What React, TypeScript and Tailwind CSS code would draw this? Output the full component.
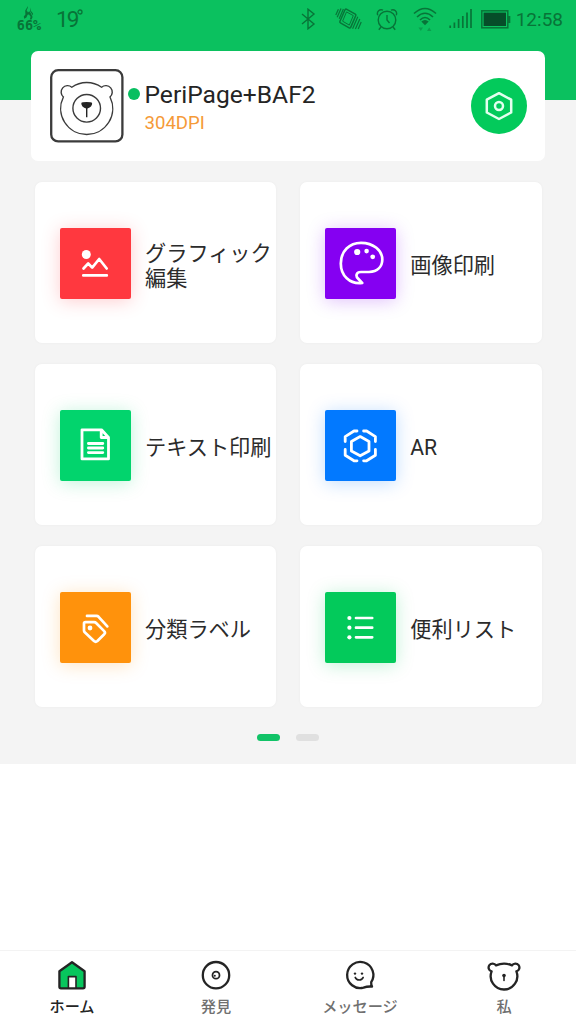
import type { ReactNode } from 'react'

const jp = "font-['Roboto','Noto_Sans_CJK_JP',sans-serif]"

interface Tile {
  label: string
  box: string
  icon: ReactNode
}

const tiles: Tile[] = [
  {
    label: 'グラフィック編集',
    box: 'bg-[#ff383f] shadow-[0_2px_18px_#ff383f40]',
    icon: (
      <>
        <circle cx="26.3" cy="26.5" r="4.5" fill="white" stroke="none" />
        <path d="M23.5 40.5L28.2 35.5L32.2 39.6L39.2 31L46.7 40.5M23.3 47.4H46.8" strokeWidth="2.7" />
      </>
    ),
  },
  {
    label: '画像印刷',
    box: 'bg-[#8500f2] shadow-[0_2px_18px_#8500f240]',
    icon: (
      <>
        <path
          d="M37.2 55C24.5 56.5 15.8 47.5 15.8 35.5C15.8 23 24.5 14.8 36 14.8C48.5 14.8 57.3 22.5 57.3 31.5C57.3 38.5 52.5 43.5 44 44H36C31 44 30.5 48 33 50.5Z"
          strokeWidth="2.7"
        />
        <g fill="white" stroke="none">
          <circle cx="32.2" cy="24" r="3.1" />
          <circle cx="41.6" cy="23.1" r="2.3" />
          <circle cx="47.7" cy="28.8" r="2.4" />
        </g>
      </>
    ),
  },
  {
    label: 'テキスト印刷',
    box: 'bg-[#02d46d] shadow-[0_2px_18px_#02d46d40]',
    icon: (
      <>
        <path d="M22 19.8H41.5L48.5 27.5V48.9H22ZM41.2 20V27.5H48.5" strokeWidth="2.8" />
        <path d="M28.4 33.5H42.8M28.4 38H42.8M28.4 42.6H42.8" strokeWidth="2.8" />
      </>
    ),
  },
  {
    label: 'AR',
    box: 'bg-[#0279ff] shadow-[0_2px_18px_#0279ff40]',
    icon: (
      <>
        <path d="M35.2 26.6L44 31.4V41L35.2 45.8L26.4 41V31.4Z" strokeWidth="2.8" />
        <path
          d="M32 21H29L20.2 26.6V31.6M38.6 21H41.6L50.4 26.6V31.6M32 50.8H29L20.2 45.3V39.5M38.6 50.8H41.6L50.4 45.3V39.5"
          strokeWidth="2.8"
        />
      </>
    ),
  },
  {
    label: '分類ラベル',
    box: 'bg-[#ff920c] shadow-[0_2px_18px_#ff920c40]',
    icon: (
      <>
        <path d="M27 23.9H36.5Q37.7 23.9 38.6 24.8L47.3 34.4" strokeWidth="2.7" />
        <path
          d="M25.5 30.2H34.2Q35.3 30.2 36.1 31L44.2 39.1Q45.7 40.6 44.2 42.2L37.4 49Q35.7 50.5 34 49L25 40.6Q24 39.7 24 38.5V31.7Q24 30.2 25.5 30.2Z"
          strokeWidth="2.7"
        />
        <circle cx="30" cy="36" r="2.4" fill="white" stroke="none" />
      </>
    ),
  },
  {
    label: '便利リスト',
    box: 'bg-[#03ca5b] shadow-[0_2px_18px_#03ca5b40]',
    icon: (
      <>
        <g fill="white" stroke="none">
          <circle cx="24.4" cy="26" r="2.1" />
          <circle cx="24.4" cy="35.7" r="2.1" />
          <circle cx="24.4" cy="45.3" r="2.1" />
        </g>
        <path d="M31 26H47.2M31 35.7H47.2M31 45.3H47.2" strokeWidth="2.7" />
      </>
    ),
  },
]

const tabs = [
  {
    label: 'ホーム',
    active: true,
    icon: (
      <>
        <path d="M18 4.2L30.6 13.3V28.7Q30.6 30.3 29 30.3H7Q5.4 30.3 5.4 28.7V13.3Z" fill="#07c65d" />
        <path d="M14.4 30V18.6H22V30Z" fill="white" strokeWidth="1.6" />
      </>
    ),
  },
  {
    label: '発見',
    icon: (
      <>
        <circle cx="18" cy="17.2" r="13.2" />
        <circle cx="18" cy="17.2" r="3.5" strokeWidth="1.8" />
        <circle cx="16.8" cy="17.8" r="1" fill="#242424" stroke="none" />
      </>
    ),
  },
  {
    label: 'メッセージ',
    icon: (
      <>
        <path d="M29.2 24.2A13.1 13.1 0 1 0 21.5 29.7Q25.5 28.2 30 28.6Q29 26.5 29.2 24.2Z" />
        <path d="M13.2 19.4Q14.2 22 17.2 22T21.2 19.4" strokeWidth="1.6" />
        <circle cx="13" cy="15.6" r="1.2" fill="#242424" stroke="none" />
        <circle cx="20" cy="15.6" r="1.2" fill="#242424" stroke="none" />
      </>
    ),
  },
  {
    label: '私',
    icon: (
      <>
        <path d="M10 7.4Q18 3.8 26 7.4A4 4 0 1 1 30.4 13.4A13.3 13.3 0 1 1 5.6 13.4A4 4 0 1 1 10 7.4Z" />
        <circle cx="18" cy="17.6" r="1.8" fill="#242424" stroke="none" />
        <path d="M18 18V22.4" strokeWidth="1.6" />
      </>
    ),
  },
]

function StatusBar() {
  return (
    <div className="flex h-[38px] items-start text-[#087438]">
      <div className="ml-[16px] flex w-[26px] flex-col items-center pt-[6px]">
        <svg width="12" height="14" viewBox="0 0 12 14" fill="currentColor">
          <path d="M5 0Q5.2 2 3.6 4.2L5 6.5L6.4 5.2L8.2 8L9.6 11L8.5 13.5H6.8L7.6 10.8L6 8.6L4.6 8.8L3.4 11.5L1.2 12.8L.8 10.5L2.4 8.5L2.2 4.5Z" />
          <path d="M7 1.5L8 5L10 7.5V9.5L7.2 5.5Z" />
        </svg>
        <span className="-mt-[1px] font-['DejaVu_Sans_Mono',monospace] text-[13.5px] leading-[13px] font-bold">66%</span>
      </div>
      <div className="ml-[14px] flex items-start pt-[6px] font-['Roboto',sans-serif] leading-[26px]">
        <span className="text-[22.5px] tracking-[-2px]">19</span>
        <svg className="mt-[3px]" width="6" height="6" viewBox="0 0 6 6" fill="none" stroke="currentColor" strokeWidth="1.3">
          <circle cx="3" cy="3" r="2" />
        </svg>
      </div>
      <div className="ml-auto flex h-[38px] items-center pr-[13px]">
        <svg className="mr-[19px]" width="16" height="22" viewBox="0 0 16 22" fill="none" stroke="currentColor" strokeWidth="1.4">
          <path d="M2 6L14 16L8 20.8V1.2L14 6L2 16" />
        </svg>
        <svg className="mr-[14px]" width="27" height="24" viewBox="0 0 27 24" fill="none" stroke="currentColor" strokeWidth="1.5">
          <path d="M11.3 2.2L20.3 7.2Q21.3 7.8 20.7 8.8L15.7 20.4Q15.2 21.4 14.2 20.9L5.4 15.8Q4.4 15.2 5 14.2L10 2.8Q10.5 1.8 11.3 2.2Z" />
          <path d="M11.5 4.9L18.3 8.6L14.3 18.1L7.6 14.2Z" strokeWidth="1" />
          <path d="M4.2 11.8L8.4 2M2.2 10.3L6 1.6M.8 8L3.4 2.2M17.6 21.7L22.8 9.8M20.4 22L24.8 12M23.2 22L26.2 15" strokeWidth="1.2" />
        </svg>
        <svg className="mr-[15px]" width="22" height="23" viewBox="0 0 22 23" fill="none" stroke="currentColor" strokeWidth="1.4">
          <circle cx="11" cy="12" r="8.8" />
          <path d="M11 7V12L13.5 15M5 19L2.8 21.8M17 19L19.2 21.8M1.8 7.2A3.8 3.8 0 0 1 7 2.2M20.2 7.2A3.8 3.8 0 0 0 15 2.2" />
        </svg>
        <svg className="mr-[12px]" width="24" height="24" viewBox="0 0 24 24" fill="none" stroke="currentColor" strokeWidth="1.6">
          <path d="M1 6.5Q12-3.5 23 6.5M4 10Q12 2.5 20 10M7 13Q12 8 17 13" />
          <path d="M8.3 14.5Q12 11.5 15.7 14.5L12 18.3Z" fill="currentColor" stroke="none" />
          <path d="M5.5 20.5H10L7.8 24ZM14 24L16.2 20.5L18.4 24Z" fill="currentColor" stroke="none" opacity=".45" />
        </svg>
        <svg className="mr-[9px]" width="23" height="20" viewBox="0 0 23 20" stroke="currentColor" strokeWidth="1.7">
          <path d="M1.2 19V16.5M5.4 19V13.5M9.6 19V10M13.8 19V7M18 19V3.5M22 19V0" />
        </svg>
        <svg className="mr-[5px]" width="30" height="19" viewBox="0 0 30 19">
          <rect x=".8" y=".8" width="26" height="17" fill="none" stroke="currentColor" strokeWidth="1.5" />
          <rect x="2.6" y="2.6" width="22.4" height="13.4" fill="#064d29" />
          <path d="M27 6H29.3V13H27Z" fill="currentColor" />
        </svg>
        <span className="pt-[2px] font-['Roboto',sans-serif] text-[19px] leading-6">12:58</span>
      </div>
    </div>
  )
}

function DeviceCard() {
  return (
    <section className="relative mx-[31px] -mt-[49px] flex h-[110px] items-center rounded-[7px] bg-white pr-[18.5px] pl-[19px]">
      <svg className="size-[74px] shrink-0" viewBox="0 0 74 74" fill="none" stroke="#3b3b3b">
        <rect x="1.2" y="1.2" width="71.2" height="71.2" rx="7" strokeWidth="2.3" />
        <path
          d="M21.8 18.2A26 26 0 0 1 51.6 18.2A6.3 6.3 0 1 1 60 28A26 26 0 1 1 13.4 28A6.3 6.3 0 1 1 21.8 18.2Z"
          strokeWidth="1.4"
        />
        <circle cx="36.7" cy="39.3" r="13.8" strokeWidth="1.4" />
        <path d="M31.3 34Q32 33 36.7 33T42.1 34Q42.5 38 36.7 39.7Q31 38 31.3 34Z" fill="#242424" stroke="none" />
        <path d="M36.7 38V48.3" stroke="#242424" strokeWidth="1.4" />
      </svg>
      <span className="mb-[25px] ml-[4px] size-3 rounded-full bg-[#07bf60]" />
      <div className="ml-[4.5px] flex-1 pt-[5px] font-['Roboto',sans-serif]">
        <h1 className="text-[24.6px] leading-[29px] text-[#242424]">PeriPage+BAF2</h1>
        <p className="text-[18.6px] leading-[28px] text-[#f59a38]">304DPI</p>
      </div>
      <button className="size-[56px] rounded-full bg-[#03ca5b]">
        <svg width="56" height="56" viewBox="0 0 56 56" fill="none" stroke="#e4ffef" strokeWidth="2.5" strokeLinejoin="round">
          <path d="M28 15.2L40.2 21.7V34.5L28 41L15.8 34.5V21.7Z" />
          <circle cx="28" cy="28" r="4" />
        </svg>
      </button>
    </section>
  )
}

export default function App() {
  return (
    <div className={`flex h-[1024px] w-[576px] flex-col overflow-hidden bg-white ${jp}`}>
      <main className="h-[764px] bg-[#f4f4f4]">
        <header className="h-[100px] bg-[#0bc15f]">
          <StatusBar />
        </header>
        <DeviceCard />
        <div className="mx-[34.5px] mt-[21.4px] grid grid-cols-2 gap-x-[23.5px] gap-y-[21px]">
          {tiles.map((tile) => (
            <div key={tile.label} className="flex h-[161px] items-center rounded-[7px] bg-white pl-[25.5px] shadow-[0_0_3px_#0000000a]">
              <div className={`mt-px size-[71px] shrink-0 rounded-[2px] ${tile.box}`}>
                <svg
                  width="71"
                  height="71"
                  viewBox="0 0 71 71"
                  fill="none"
                  stroke="white"
                  strokeLinecap="round"
                  strokeLinejoin="round"
                >
                  {tile.icon}
                </svg>
              </div>
              <span className="ml-[14px] w-[130px] pt-[6px] text-[21.2px] leading-[25px] text-[#2b2b2b]">{tile.label}</span>
            </div>
          ))}
        </div>
        <div className="mt-[26.6px] flex justify-center gap-4">
          <span className="h-[7px] w-[23px] rounded-full bg-[#11c367]" />
          <span className="h-[7px] w-[23px] rounded-full bg-[#e0e0e0]" />
        </div>
      </main>

      <nav className="mt-auto grid h-[74px] grid-cols-4 border-t border-[#f3f3f3] pt-[7px]">
        {tabs.map((tab) => (
          <button key={tab.label} className="flex flex-col items-center">
            <svg
              width="36"
              height="34"
              viewBox="0 0 36 34"
              fill="none"
              stroke="#242424"
              strokeWidth="2.3"
              strokeLinecap="round"
              strokeLinejoin="round"
            >
              {tab.icon}
            </svg>
            <span
              className={
                tab.active
                  ? 'mt-[5px] text-[15.2px] leading-5 font-medium text-[#242424]'
                  : 'mt-[5px] text-[15.2px] leading-5 font-medium text-[#707070]'
              }
            >
              {tab.label}
            </span>
          </button>
        ))}
      </nav>
    </div>
  )
}
